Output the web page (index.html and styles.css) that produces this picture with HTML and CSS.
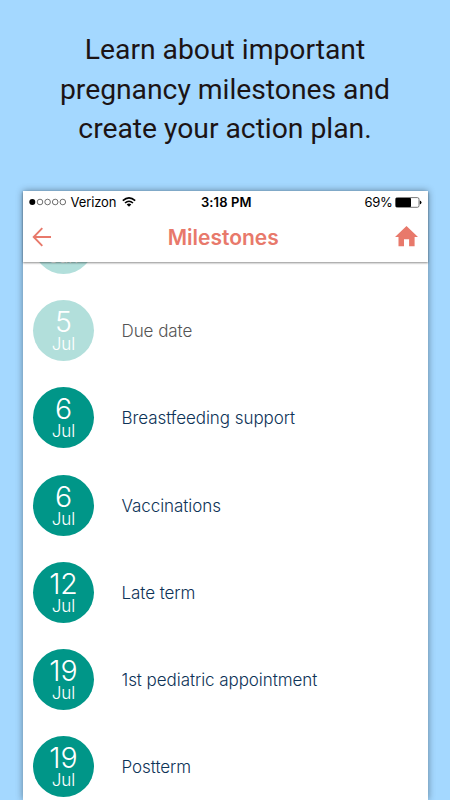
FILE: index.html
```html
<!DOCTYPE html>
<html lang="en">
<head>
<meta charset="utf-8">
<title>Milestones</title>
<link rel="stylesheet" href="styles.css">
</head>
<body>
<h1 class="headline">Learn about important<br>pregnancy milestones and<br>create your action plan.</h1>
<main class="phone">
  <header class="top">
    <div class="status">
      <div class="carrier">
        <svg class="dots" width="38" height="8" viewBox="0 0 38 8" fill="none" stroke="#222" stroke-width=".65"><circle cx="3.3" cy="4" r="3" fill="#000" stroke="none"/><circle cx="11" cy="4" r="2.8"/><circle cx="18.6" cy="4" r="2.8"/><circle cx="26.2" cy="4" r="2.8"/><circle cx="33.8" cy="4" r="2.8"/></svg>
        <span class="network">Verizon</span>
        <svg class="wifi" width="14" height="10" viewBox="0 0 14 10" fill="none" stroke="#000" stroke-width="1.6"><path d="M.8 3.7Q7-1.8 13.2 3.7M3 6Q7 2.5 11 6"/><path d="M4.7 7.5Q7 5.5 9.3 7.5L7 9.8Z" fill="#000" stroke="none"/></svg>
      </div>
      <span class="time">3:18 PM</span>
      <div class="power">
        <span class="percent">69%</span>
        <svg width="27" height="11" viewBox="0 0 27 11"><rect x=".6" y=".6" width="23.4" height="9.7" rx="1.6" fill="none" stroke="#555" stroke-width=".8"/><rect x=".7" y="1" width="15.3" height="9" rx=".8"/><path d="M24.8 3.6q1.7.3 1.7 1.9t-1.7 1.9z"/></svg>
      </div>
    </div>
    <nav class="nav">
      <svg class="back" width="20" height="20" viewBox="0 0 20 20" fill="none" stroke="#e8796b" stroke-width="1.9"><path d="M10.3 1.2 1.7 10l8.6 8.8M1.7 10H19"/></svg>
      <span class="title">Milestones</span>
      <svg class="home" width="23" height="21" viewBox="0 0 23 21" fill="#e8796b"><path d="M11.5 0 23 11h-3.4v9.3h-5.5v-7H9v7H3.5V11H0Z"/></svg>
    </nav>
  </header>
  <div class="list">
    <div class="row past"><div class="date"><b>28</b><span>Jun</span></div></div>
    <div class="row past"><div class="date"><b>5</b><span>Jul</span></div><span class="label">Due date</span></div>
    <div class="row"><div class="date"><b>6</b><span>Jul</span></div><span class="label">Breastfeeding support</span></div>
    <div class="row"><div class="date"><b>6</b><span>Jul</span></div><span class="label">Vaccinations</span></div>
    <div class="row"><div class="date"><b>12</b><span>Jul</span></div><span class="label">Late term</span></div>
    <div class="row"><div class="date"><b>19</b><span>Jul</span></div><span class="label">1st pediatric appointment</span></div>
    <div class="row"><div class="date"><b>19</b><span>Jul</span></div><span class="label">Postterm</span></div>
  </div>
</main>
</body>
</html>
```
FILE: styles.css
```css
* { box-sizing: border-box; }
body {
  margin: 0;
  height: 800px;
  overflow: hidden;
  background: #a4d8ff;
  font-family: Inter, "Liberation Sans", sans-serif;
  display: flex;
  flex-direction: column;
  align-items: center;
}
.headline {
  margin: 0;
  padding-top: 30px;
  height: 191px;
  flex: none;
  font: 400 28.3px/39.5px Roboto, sans-serif;
  letter-spacing: -.02px;
  color: #1c1415;
  text-align: center;
  white-space: nowrap;
}
.phone {
  width: 405px;
  flex: 1;
  min-height: 0;
  display: flex;
  flex-direction: column;
  background: #fff;
  box-shadow: 0 0 7px rgba(0, 0, 0, .42);
}
.top {
  height: 71px;
  flex: none;
  background: #fff;
  box-shadow: 0 1px 2px rgba(0, 0, 0, .45);
  position: relative;
  z-index: 1;
}
.status {
  height: 22px;
  padding: 0 6px 0 6.5px;
  display: grid;
  grid-template-columns: 1fr auto 1fr;
  align-items: center;
  font-size: 13px;
  color: #000;
}
.carrier, .power { display: flex; align-items: center; }
.network { margin: 0 6px 0 3.5px; letter-spacing: -.1px; }
.time { font-weight: 600; letter-spacing: .12px; padding-left: 2px; }
.percent { letter-spacing: -.3px; }
.power { justify-content: flex-end; gap: 2px; }
.nav {
  height: 48px;
  padding: 0 10px 0 9.5px;
  display: flex;
  align-items: center;
  justify-content: space-between;
}
.back { margin-top: -1px; }
.home { margin-top: -1px; }
.title {
  font-size: 21px;
  font-weight: 570;
  line-height: 24px;
  padding-top: 2px;
  color: #e8796b;
}
.list {
  flex: 1;
  min-height: 0;
  overflow: hidden;
}
.row {
  height: 87.25px;
  padding-left: 10.5px;
  display: flex;
  align-items: center;
  gap: 27.5px;
}
.row:first-child { margin-top: -62.2px; }
.date {
  width: 61px;
  height: 61px;
  border-radius: 50%;
  background: #009688;
  color: #fff;
  display: flex;
  flex-direction: column;
  align-items: center;
  padding-top: 8px;
  font-weight: 300;
}
.date b { font-size: 28.5px; line-height: 28px; font-weight: 300; }
.date span { font-size: 17px; line-height: 17px; }
.past .date { background: #b2dfdb; }
.label {
  font-size: 17px;
  font-weight: 300;
  letter-spacing: -.06px;
  padding-top: 1px;
  color: #0d3357;
}
.past .label { color: #555; }
```
